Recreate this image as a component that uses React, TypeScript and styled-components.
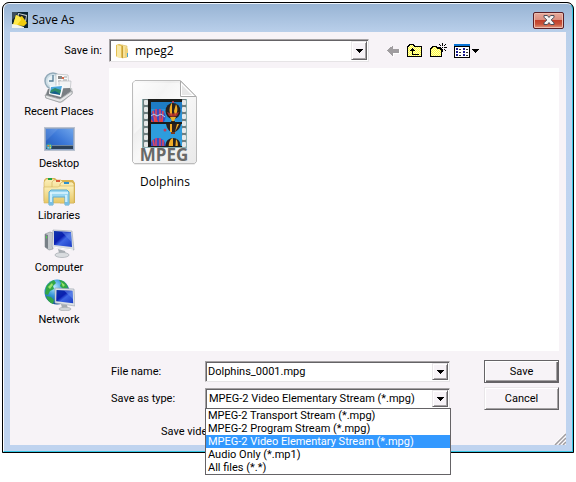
import React, { useState } from "react";
import styled, { createGlobalStyle, css } from "styled-components";

const uiFont = `Roboto, "Liberation Sans", Arial, sans-serif`;
const shellFont = `"Open Sans", "Noto Sans", sans-serif`;

const GlobalStyle = createGlobalStyle`
  *, *::before, *::after { box-sizing: border-box; }
  body { margin: 0; background: #fff; font-family: ${uiFont}; font-size: 11px; line-height: 13px; color: #000; }
  button, input, select { font: inherit; color: inherit; }
`;

const sunken = css`
  background: #fff;
  border: 1px solid;
  border-color: #a5a2a4 #e6e4e6 #e6e4e6 #a5a2a4;
  box-shadow: inset 1px 1px 0 #656366;
`;

const raised = css`
  background: #f7f3f7;
  border: 1px solid;
  border-color: #e9e6e9 #656366 #656366 #e9e6e9;
  box-shadow: inset 1px 1px 0 #fff, inset -1px -1px 0 #a5a2a4;
`;

const Page = styled.main`
  min-height: 100vh;
  padding: 2px;
`;

const Window = styled.section`
  border: 1px solid #000;
  border-radius: 7px 7px 0 0;
  background: #000;
`;

const Frame = styled.div`
  border: 1px solid;
  border-color: #eef4fb #35c6e4 #35c6e4 #fff;
  border-radius: 6px 6px 0 0;
  padding: 0 6px 6px;
  background: linear-gradient(#98b4d4 0, #b9cfea 28px, #bfd4f0 90px, #bfd3ef 100%);
`;

const TitleBar = styled.header`
  display: flex;
  align-items: center;
  height: 28px;
  gap: 4px;
  padding: 4px 2px 0;
`;

const Title = styled.h1`
  flex: 1;
  margin: 0;
  font: 400 12px/16px ${shellFont};
`;

const CloseButton = styled.button`
  display: grid;
  place-items: center;
  width: 31px;
  height: 17px;
  padding: 0;
  border: 1px solid #5a1f26;
  border-radius: 2px;
  background: linear-gradient(#e6a99b 0, #dc8f80 45%, #c1402b 50%, #c9533a 75%, #e09a80 100%);
  box-shadow: inset 0 0 0 1px #edbcae;
`;

const Body = styled.form`
  display: flex;
  flex-direction: column;
  padding: 7px 7px 1px 0;
  background: #f7f3f7;
`;

const LookIn = styled.div`
  display: grid;
  grid-template-columns: 92px minmax(0, 1fr) 183px;
  align-items: center;
  column-gap: 7px;
  height: 23px;
`;

const LookInLabel = styled.label`
  text-align: right;
`;

const Combo = styled.div<{ $tall?: boolean }>`
  ${sunken}
  position: relative;
  display: flex;
  align-items: center;
  height: ${(p) => (p.$tall ? 23 : 21)}px;
  padding: 1px;
`;

const comboField = css`
  flex: 1;
  min-width: 0;
  height: 100%;
  border: 0;
  outline: 0;
  background: transparent;
  appearance: none;
`;

const Select = styled.select<{ $shell?: boolean }>`
  ${comboField}
  padding: 0 2px;
  ${(p) => p.$shell && css`padding: 0 4px; font: 12px/16px ${shellFont};`}
`;

const Input = styled.input`
  ${comboField}
  padding: 0 1px;
`;

const ComboButton = styled.button`
  ${raised}
  display: grid;
  place-items: center;
  width: 16px;
  height: 100%;
  padding: 0;
`;

const FolderSlot = styled.span`
  display: flex;
  padding-left: 4px;
`;

const Tools = styled.div`
  display: flex;
  align-items: center;
  gap: 7px;
  padding-left: 11px;
`;

const ToolButton = styled.button`
  display: flex;
  padding: 0;
  border: 0;
  background: none;
`;

const Browser = styled.div`
  display: grid;
  grid-template-columns: 92px minmax(0, 1fr);
  column-gap: 7px;
  margin-top: 6px;
`;

const Places = styled.nav`
  display: flex;
  flex-direction: column;
  gap: 5px;
  padding: 3px 0 25px 6px;
`;

const Place = styled.button`
  display: flex;
  flex-direction: column;
  align-items: center;
  gap: 2px;
  padding: 0;
  border: 0;
  background: none;
  white-space: nowrap;
`;

const Files = styled.ul`
  display: flex;
  align-items: flex-start;
  margin: 0;
  padding: 12px 23px;
  list-style: none;
  background: #fff;
`;

const FileButton = styled.button`
  display: flex;
  flex-direction: column;
  align-items: center;
  gap: 8px;
  padding: 0;
  border: 0;
  background: none;
  font: 12px/16px ${shellFont};
`;

const Fields = styled.div`
  display: grid;
  grid-template-columns: 94px minmax(0, 1fr) 75px;
  grid-template-rows: 23px 23px 26px;
  align-items: center;
  row-gap: 4px;
  margin: 9px 0 0 101px;
`;

const FieldCell = styled.div`
  margin-right: 34px;
`;

const IndentedLabel = styled.span`
  padding-left: 50px;
  padding-top: 11px;
  white-space: nowrap;
  align-self: start;
`;

const PushButton = styled.button<{ $primary?: boolean }>`
  ${raised}
  height: 23px;
  padding: 0;
  ${(p) => p.$primary && css`
    border-color: #656366;
    box-shadow: inset 1px 1px 0 #fff, inset -1px -1px 0 #656366, inset -2px -2px 0 #a5a2a4;
  `}
`;

const Options = styled.ul`
  position: absolute;
  z-index: 2;
  top: 100%;
  left: -1px;
  right: -2px;
  margin: 0;
  padding: 0;
  list-style: none;
  border: 1px solid #656366;
  background: #fff;
`;

const Option = styled.li<{ $active: boolean }>`
  padding: 0 2px;
  line-height: 13px;
  white-space: nowrap;
  background: ${(p) => (p.$active ? "#3399ff" : "#fff")};
  color: ${(p) => (p.$active ? "#fff" : "#000")};
`;

const Footer = styled.div`
  display: flex;
  justify-content: flex-end;
  height: 4px;
  margin-right: -7px;
  align-items: flex-end;
`;

const Grip = styled.svg`
  flex: none;
  margin-bottom: -1px;
`;

const DownArrow = () => (
  <svg width="7" height="4" shapeRendering="crispEdges" aria-hidden="true">
    <path d="M0 0h7v1H6v1H5v1H4v1H3V3H2V2H1V1H0z" />
  </svg>
);

const AppIcon = () => (
  <svg width="16" height="16" viewBox="0 0 16 16" aria-hidden="true">
    <rect width="16" height="16" fill="#0c2430" />
    <path d="M0 0h6L3 5 0 8z" fill="#3d4d5c" />
    <path d="M6 1l9 2-1 7-9-4z" fill="#c9d2d6" />
    <path d="M7 2l7 2-1 5-7-3z" fill="#1a2126" />
    <path d="M4 3l4 2 2-1 5 7-3 3-11-1z" fill="#f0cc10" />
    <path d="M4 3l4 2 1 3-4 5-4 0z" fill="#ffe94c" />
    <path d="M0 12l6 1 6 2v1H0z" fill="#f4f4ea" />
  </svg>
);

const CloseGlyph = () => (
  <svg width="12" height="10" viewBox="0 0 12 10" aria-hidden="true">
    <path d="M1 .5h3.4L6 2.5 7.600.5H11v1.700L8.200 5 11 7.800v1.700H7.600L6 7.500l-1.600 2H1V7.800L3.800 5 1 2.200z" fill="#f5f5f5" stroke="#4a4f5b" />
  </svg>
);

const SmallFolder = () => (
  <svg width="16" height="16" viewBox="0 0 16 16" aria-hidden="true">
    <path d="M1 2l3-1 4 1v13l-6-1-1-1z" fill="#e4bf52" />
    <path d="M7 2l5 1v11l-5 1z" fill="#f6e29a" stroke="#d8b95a" strokeWidth=".6" />
    <path d="M2 2l4 1v12l-4-1z" fill="#f9e9a8" />
    <path d="M7 3h1v12H7z" fill="#c79f35" />
    <path d="M10 4l3 2v8l-3 1z" fill="#efd27a" />
    <path d="M12 10h1v4h-1z" fill="#4ea3c9" />
  </svg>
);

const BackIcon = () => (
  <svg width="13" height="12" viewBox="0 0 13 12" shapeRendering="crispEdges" aria-hidden="true">
    <path d="M6 2v2h7v5H7v3H6L1 7z" fill="#fff" />
    <path d="M5 1h1v3h6v4H6v3H5v-1H4V9H3V8H2V7H1V6H0V5h1V4h1V3h1V2h2z" fill="#a09da0" />
  </svg>
);

const Dither = ({ id }: { id: string }) => (
  <pattern id={id} width="2" height="2" patternUnits="userSpaceOnUse">
    <rect width="2" height="2" fill="#ffff3c" />
    <path d="M0 0h1v1H0zM1 1h1v1H1z" fill="#fffbc0" />
  </pattern>
);

const UpIcon = () => (
  <svg width="16" height="14" viewBox="0 0 16 14" shapeRendering="crispEdges" aria-hidden="true">
    <defs><Dither id="upFill" /></defs>
    <path d="M.5 2.500h1v-1h1v-1h4v1h1v1h7v10H.5z" fill="url(#upFill)" stroke="#000" />
    <path d="M5 4h1v1h1v1h1v1H6v3h6v1H5V7H3V6h1V5h1z" />
  </svg>
);

const NewFolderIcon = () => (
  <svg width="17" height="15" viewBox="0 0 17 15" shapeRendering="crispEdges" aria-hidden="true">
    <defs><Dither id="newFill" /></defs>
    <path d="M.5 5.500h1v-1h1v-1h4v1h1v1h4v8H.5z" fill="url(#newFill)" stroke="#000" />
    <path d="M11.500 5.500v8" stroke="#000" />
    <path d="M12 0h1v3h-1zM12 6h1v3h-1zM8 4h3v1H8zM14 4h3v1h-3zM9 1h1v1H9zM10 2h1v1h-1zM15 1h1v1h-1zM14 2h1v1h-1zM10 6h1v1h-1zM14 6h1v1h-1zM15 7h1v1h-1zM12 4h1v1h-1z" />
  </svg>
);

const ViewsIcon = () => (
  <svg width="25" height="14" viewBox="0 0 25 14" shapeRendering="crispEdges" aria-hidden="true">
    <rect x=".5" y=".5" width="15" height="13" fill="#fff" stroke="#000" />
    <path d="M0 0h16v3H0z" fill="#0873d6" />
    <path d="M0 2h16v1H0z" />
    <path d="M2 4h2v2H2zM2 7h2v2H2zM2 10h2v2H2zM9 4h2v2H9zM9 7h2v2H9zM9 10h2v2H9z" fill="#19198c" />
    <path d="M5 5h2v1H5zM5 8h2v1H5zM5 11h2v1H5zM12 5h2v1h-2zM12 8h2v1h-2zM12 11h2v1h-2z" fill="#333" />
    <path d="M18 5h7v1h-1v1h-1v1h-1v1h-1V8h-1V7h-1V6h-1z" />
  </svg>
);

const RecentIcon = () => (
  <svg width="32" height="32" viewBox="0 0 32 32" aria-hidden="true">
    <circle cx="10" cy="10" r="8" fill="#cddde6" stroke="#91a9b8" strokeWidth="1.500" />
    <circle cx="10" cy="10" r="5.500" fill="#e8f1f5" />
    <path d="M10 4v6H6" fill="none" stroke="#557c94" strokeWidth="1.300" />
    <path d="M13 3l12 1 1 14-13-1z" fill="#fbfbfb" stroke="#b5b9bc" strokeWidth=".7" />
    <path d="M15 5h4v3h-4z" fill="#888" />
    <path d="M21 6h3M15 10h3M20 9h4M20 11h4" stroke="#9a9fa3" />
    <path d="M19 6h2v2h-2z" fill="#d96a4a" />
    <path d="M16 10h12l-1 11H16z" fill="#f3f4f5" stroke="#b0b4b8" strokeWidth=".6" />
    <path d="M2 24l3-6 24-1 1 5-10 9-3 1-15-5z" fill="#c9cbcd" />
    <path d="M5 18l-2 6 14 4 11-8-1-3z" fill="#7a7f83" />
    <path d="M7 15l14-1-3 12-12-3z" fill="#f8fafb" />
    <path d="M8 16l11-1-2 8-10-1z" fill="#4aa6dd" />
    <path d="M8 19l4-2 6 2-1 4-10-1z" fill="#2e8b6a" />
    <path d="M7 22l5-2 5 3v1z" fill="#155d8a" />
    <path d="M2 24l15 4 12-8v3l-11 8h-2L3 27z" fill="#e6e7e8" stroke="#8f9397" strokeWidth=".7" />
  </svg>
);

const DesktopIcon = () => (
  <svg width="32" height="32" viewBox="0 0 32 32" aria-hidden="true">
    <defs>
      <linearGradient id="desk" x1="0" y1="1" x2="1" y2="0">
        <stop offset="0" stopColor="#2359b5" /><stop offset=".5" stopColor="#3c78d8" /><stop offset="1" stopColor="#6ea4ea" />
      </linearGradient>
    </defs>
    <rect x="1" y="4" width="31" height="24" fill="#b9c1cf" />
    <rect x="2" y="5" width="29" height="22" fill="#8ea4c7" />
    <rect x="3" y="6" width="27" height="20" fill="url(#desk)" />
    <path d="M3 6h12L3 18z" fill="#fff" opacity=".1" />
    <path d="M3 22h27v4H3z" fill="#2c4159" />
    <path d="M3 22h27v1H3z" fill="#71879d" />
    <circle cx="6" cy="23.500" r="3" fill="#3692b0" />
    <path d="M4.500 22h1.500v1.500H4.500z" fill="#e98b43" /><path d="M6.500 22H8v1.500H6.500z" fill="#a8d65b" />
    <path d="M4.500 24h1.500v1.500H4.500z" fill="#80c8f0" /><path d="M6.500 24H8v1.500H6.500z" fill="#f3d955" />
  </svg>
);

const LibrariesIcon = () => (
  <svg width="32" height="32" viewBox="0 0 32 32" aria-hidden="true">
    <defs>
      <linearGradient id="lib" x1="0" y1="0" x2="0" y2="1">
        <stop offset="0" stopColor="#fbefb8" /><stop offset="1" stopColor="#e8c765" />
      </linearGradient>
    </defs>
    <path d="M1 5l2-2h9l2 2h16l2 3v20H1z" fill="#d9b552" />
    <path d="M1 7l2-3h8l2 2h6v20H1z" fill="url(#lib)" stroke="#ccaa55" strokeWidth=".6" />
    <path d="M9 10V7l2-2h7l2 2h5v20H9z" fill="url(#lib)" stroke="#ccaa55" strokeWidth=".6" />
    <path d="M17 11V9l2-2h10l2 2v19H17z" fill="url(#lib)" stroke="#ccaa55" strokeWidth=".6" />
    <path d="M1 12h14l2-1h14v17H1z" fill="url(#lib)" stroke="#d5b55f" strokeWidth=".6" />
    <path d="M5 3h4v2H5z" fill="#24a543" /><path d="M13 5h4v2h-4z" fill="#d85935" /><path d="M21 7h5v2h-5z" fill="#2c91ce" />
    <path d="M6 17l2-2h16l2 2v13h-4v-8H10v8H6z" fill="#9bd7f1" stroke="#5caad0" />
    <path d="M7 18h18M8 18v11M23 20v9" stroke="#dff6ff" strokeWidth="1.500" />
    <path d="M6 27h4v3H6zM22 27h4v3h-4z" fill="#78bee4" />
  </svg>
);

const MonitorFill = ({ id }: { id: string }) => (
  <linearGradient id={id} x1="0" y1="0" x2="1" y2="1">
    <stop offset="0" stopColor="#1037aa" /><stop offset=".4" stopColor="#0a1fb0" />
    <stop offset=".55" stopColor="#3d66e4" /><stop offset="1" stopColor="#1a3cc4" />
  </linearGradient>
);

const ComputerIcon = () => (
  <svg width="32" height="32" viewBox="0 0 32 32" aria-hidden="true">
    <defs><MonitorFill id="pc" /></defs>
    <path d="M2 7l5-2 3 1v16l-4 1-4-3z" fill="#c2c7cb" stroke="#8b9298" strokeWidth=".6" />
    <path d="M2 7l3 1v14l-3-2z" fill="#777f86" />
    <path d="M3 9l1 .5v2L3 11z" fill="#49e044" />
    <path d="M15 22l7 2 1 4-7-2z" fill="#a7adb2" />
    <ellipse cx="19" cy="28" rx="7" ry="2.500" fill="#d9dcdf" stroke="#a5abb0" strokeWidth=".7" />
    <path d="M10 3l19 1 2 19-22-3z" fill="#d8dde2" stroke="#9da6af" strokeWidth=".6" />
    <path d="M11 4l17 1 1 15-18-2z" fill="url(#pc)" />
    <path d="M19 5l9 .5.500 9.500z" fill="#648be9" opacity=".6" />
    <path d="M10 20l20 3" stroke="#fff" />
  </svg>
);

const NetworkIcon = () => (
  <svg width="32" height="32" viewBox="0 0 32 32" aria-hidden="true">
    <defs>
      <MonitorFill id="net" />
      <radialGradient id="globe" cx=".4" cy=".3" r=".7">
        <stop offset="0" stopColor="#b7eaff" /><stop offset=".5" stopColor="#3595d8" /><stop offset="1" stopColor="#104a96" />
      </radialGradient>
    </defs>
    <circle cx="14" cy="13" r="12.500" fill="url(#globe)" />
    <path d="M3 8c2-4 5-6 8-7l2 3-3 3 1 3-4 2-2 4-3-1zM16 1c5 0 8 4 9 8l-5 1-3-3 1-3zM3 17l5 1 3 3-1 4c-3-1-6-4-7-8z" fill="#32a646" />
    <path d="M5 8l4-4 1 2-3 4zM18 3l4 3-2 2z" fill="#9ae36a" />
    <path d="M18 25l6 1 1 4-6-1z" fill="#a7adb2" />
    <ellipse cx="22" cy="30" rx="6" ry="1.800" fill="#d0d4d7" stroke="#9da3a8" strokeWidth=".6" />
    <path d="M12 9l19 1 1 17-20-3z" fill="#dde1e5" stroke="#98a2ac" strokeWidth=".6" />
    <path d="M13.500 11l16 .8.700 12.500-17-2z" fill="url(#net)" />
    <path d="M21 11.500l8.500.5.500 8z" fill="#648be9" opacity=".6" />
  </svg>
);

const Balloons = () => (
  <>
    <rect width="31" height="22" fill="#2a92d6" />
    <path d="M0 0h31v7H0z" fill="#1e7cc4" />
    <ellipse cx="7" cy="15" rx="7.500" ry="8" fill="#3b4bc4" />
    <path d="M2 9l2 11M5 7v14M9 7v14M12 9l-1 11" stroke="#e1495c" strokeWidth="1.500" />
    <path d="M0 14l3-2 3 2 4-2 4 3" fill="none" stroke="#a9d6f2" />
    <path d="M0 17l3 4 2-5 3 5 3-5 1 6H0z" fill="#ef3c35" />
    <ellipse cx="22" cy="9" rx="7.500" ry="8" fill="#27201e" />
    <path d="M20 2c-2 4-2 8 0 12l1-1V1zM25 2c2 4 2 8-1 12l-1-5z" fill="#f1ad27" />
    <path d="M16 10c4 2 8 2 12 0l-2 4c-3 1-6 1-8 0z" fill="#c9362e" opacity=".8" />
    <path d="M19 15h6l-2 4h-2z" fill="#e8b22b" />
    <path d="M20 19h4v2h-4z" fill="#3c2a1c" />
    <circle cx="22" cy="0" r="1" fill="#cf3a5b" />
  </>
);

const MpegIcon = () => (
  <svg width="66" height="86" viewBox="0 0 66 86" aria-hidden="true">
    <defs>
      <linearGradient id="paper" x1="0" y1="0" x2="1" y2="1">
        <stop offset="0" stopColor="#fdfdfd" /><stop offset=".3" stopColor="#ececec" />
        <stop offset=".5" stopColor="#f8f8f8" /><stop offset="1" stopColor="#e9e9e9" />
      </linearGradient>
      <clipPath id="shotTop"><rect x="19" y="21" width="31" height="21" /></clipPath>
      <clipPath id="shotBottom"><rect x="19" y="44" width="31" height="22" /></clipPath>
    </defs>
    <path d="M3 1.500h46L64.500 17v65l-2 2.500h-60L.5 82V4z" fill="#d7d7d7" />
    <path d="M3 .5h45.500L64.500 17v64.500l-2 2h-60l-2-2V3z" fill="url(#paper)" stroke="#bcbcbc" />
    <path d="M2 3h45l8 16C35 19 22 35 2 54z" fill="#fff" opacity=".45" />
    <path d="M48.500 1v15.500H64z" fill="#fff" stroke="#aaa" />
    <path d="M50 5l10 10H50z" fill="#e7e7e7" />
    <rect x="10" y="19" width="45" height="49" fill="#8aaeb0" />
    <rect x="11" y="19" width="43" height="48" fill="#6e7f80" />
    <rect x="16" y="19" width="34" height="48" fill="#1b1d1b" />
    {[20, 27, 34, 41, 48, 55, 62].map((y) => (
      <g key={y} fill="#e5e8e8">
        <rect x="12" y={y} width="4" height="5" rx="1" />
        <rect x="50" y={y} width="4" height="5" rx="1" />
      </g>
    ))}
    <g clipPath="url(#shotTop)"><g transform="translate(19 22)"><Balloons /></g></g>
    <g clipPath="url(#shotBottom)">
      <rect x="19" y="44" width="31" height="24" fill="#2d9ddd" />
      <path d="M34 44h15c-1 5-4 7-6 8h-4c-3-2-4-4-5-8z" fill="#2b211f" />
      <path d="M38 44h2v8h-2zM45 44h2l-4 8z" fill="#f1ad27" />
      <path d="M39 52h4v2h-4z" fill="#7a3a1c" />
      <circle cx="33" cy="50" r="1.500" fill="#c23a5a" />
      <g transform="translate(19 50)">
        <ellipse cx="7" cy="15" rx="7.500" ry="7" fill="#3b4bc4" />
        <path d="M2 10l2 10M5 8v14M9 8v14M12 10v10" stroke="#e1495c" strokeWidth="1.500" />
        <ellipse cx="22" cy="15" rx="7.500" ry="7" fill="#27201e" />
        <path d="M20 9c-3 4-3 9 0 12h2V8zM25 9c3 4 2 9-1 12z" fill="#f1ad27" />
      </g>
    </g>
    <text x="32" y="81" textAnchor="middle" fontFamily="Open Sans, sans-serif" fontWeight="700" fontSize="17" fill="#686968">MPEG</text>
  </svg>
);

const GripIcon = () => (
  <Grip width="12" height="12" viewBox="0 0 12 12" aria-hidden="true">
    <path d="M1 12L12 1M5 12l7-7M9 12l3-3" stroke="#a09da0" strokeWidth="1.500" />
    <path d="M0 11L11 0M4 11l8-8M8 11l4-4" stroke="#fff" strokeWidth=".7" />
  </Grip>
);

const places = [
  { name: "Recent Places", Icon: RecentIcon },
  { name: "Desktop", Icon: DesktopIcon },
  { name: "Libraries", Icon: LibrariesIcon },
  { name: "Computer", Icon: ComputerIcon },
  { name: "Network", Icon: NetworkIcon },
];

const types = [
  "MPEG-2 Transport Stream (*.mpg)",
  "MPEG-2 Program Stream (*.mpg)",
  "MPEG-2 Video Elementary Stream (*.mpg)",
  "Audio Only (*.mp1)",
  "All files (*.*)",
];

export default function App() {
  const [fileName, setFileName] = useState("Dolphins_0001.mpg");
  const [type, setType] = useState(types[2]);
  const [open, setOpen] = useState(true);

  return (
    <Page>
      <GlobalStyle />
      <Window role="dialog" aria-labelledby="dialog-title">
        <Frame>
          <TitleBar>
            <AppIcon />
            <Title id="dialog-title">Save As</Title>
            <CloseButton type="button" aria-label="Close"><CloseGlyph /></CloseButton>
          </TitleBar>
          <Body onSubmit={(e) => e.preventDefault()}>
            <LookIn>
              <LookInLabel htmlFor="folder">Save in:</LookInLabel>
              <Combo $tall>
                <FolderSlot><SmallFolder /></FolderSlot>
                <Select id="folder" $shell defaultValue="mpeg2"><option>mpeg2</option></Select>
                <ComboButton type="button" aria-label="Show folders"><DownArrow /></ComboButton>
              </Combo>
              <Tools>
                <ToolButton type="button" aria-label="Back"><BackIcon /></ToolButton>
                <ToolButton type="button" aria-label="Up one level"><UpIcon /></ToolButton>
                <ToolButton type="button" aria-label="New folder"><NewFolderIcon /></ToolButton>
                <ToolButton type="button" aria-label="Views"><ViewsIcon /></ToolButton>
              </Tools>
            </LookIn>

            <Browser>
              <Places aria-label="Places">
                {places.map(({ name, Icon }) => (
                  <Place type="button" key={name}><Icon />{name}</Place>
                ))}
              </Places>
              <Files aria-label="Files">
                <li><FileButton type="button"><MpegIcon />Dolphins</FileButton></li>
              </Files>
            </Browser>

            <Fields>
              <label htmlFor="file-name">File name:</label>
              <FieldCell>
                <Combo>
                  <Input id="file-name" value={fileName} onChange={(e) => setFileName(e.target.value)} />
                  <ComboButton type="button" aria-label="Show file names"><DownArrow /></ComboButton>
                </Combo>
              </FieldCell>
              <PushButton $primary type="submit">Save</PushButton>

              <label htmlFor="file-type">Save as type:</label>
              <FieldCell>
                <Combo>
                  <Select id="file-type" value={type} onChange={(e) => setType(e.target.value)}>
                    {types.map((t) => <option key={t}>{t}</option>)}
                  </Select>
                  <ComboButton type="button" aria-label="Show types" aria-expanded={open} onClick={() => setOpen(!open)}>
                    <DownArrow />
                  </ComboButton>
                  {open && (
                    <Options role="listbox" aria-label="Save as type">
                      {types.map((t) => (
                        <Option
                          key={t}
                          role="option"
                          aria-selected={t === type}
                          $active={t === type}
                          onClick={() => { setType(t); setOpen(false); }}
                        >
                          {t}
                        </Option>
                      ))}
                    </Options>
                  )}
                </Combo>
              </FieldCell>
              <PushButton type="button">Cancel</PushButton>

              <IndentedLabel>Save video</IndentedLabel>
            </Fields>
            <Footer><GripIcon /></Footer>
          </Body>
        </Frame>
      </Window>
    </Page>
  );
}
